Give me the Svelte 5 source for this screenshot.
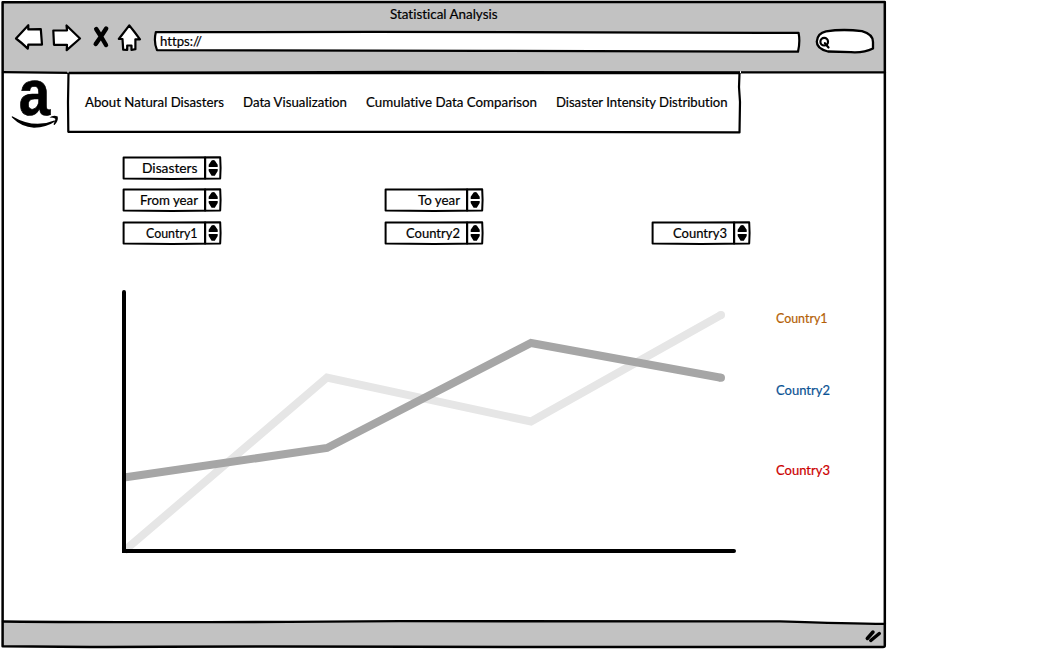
<script>
  const nav = [
    { text: 'About Natural Disasters', width: 139 },
    { text: 'Data Visualization', width: 104 },
    { text: 'Cumulative Data Comparison', width: 171 },
    { text: 'Disaster Intensity Distribution', width: 171.5 }
  ];
  const filters = [
    [{ text: 'Disasters', width: 55.5 }, null, null],
    [{ text: 'From year', width: 58 }, { text: 'To year', width: 42 }, null],
    [{ text: 'Country1', width: 51.5 }, { text: 'Country2', width: 54 }, { text: 'Country3', width: 54 }]
  ];
  const legend = [
    { text: 'Country1', width: 51.5, color: '#b45f06' },
    { text: 'Country2', width: 54, color: '#0b5394' },
    { text: 'Country3', width: 54, color: '#cc0000' }
  ];
</script>

{#snippet label(text, width, color)}
  <svg class="label" {width} height="18">
    <text x="0" y="13" textLength={width} lengthAdjust="spacingAndGlyphs" fill={color ?? '#000'} stroke={color ?? '#000'}>{text}</text>
  </svg>
{/snippet}

{#snippet stepper(item)}
  <div class="stack stepper">
    <svg width="100" height="24" class="ink">
      <path d="M1.6 1.6L50 1.4L98.2 1.3Q99 12 98.2 22.4L50 22.9L1.6 22.4Z" fill="#fff" stroke-width="2" />
      <path d="M83.1 1.5V22.5" stroke-width="2.2" />
      <path d="M89.6 4.6L91.2 4L92.8 4.6L95.7 8.8V10.9H86.7V8.8ZM86.7 13H95.7V15L92.8 19.8H89.6L86.7 15Z" fill="#000" stroke="none" />
    </svg>
    <div class="value">{@render label(item.text, item.width)}</div>
  </div>
{/snippet}

<div class="window stack">
  <svg class="ink" width="888" height="649">
    <path d="M3 3H885V72.5H3ZM3 621.8Q150 623 330 621.3H790L885 624.2V646.5H330L3 646Z" fill="#c2c2c2" stroke="none" />
    <path d="M2.6 2.2L360 1.9L884.8 2L885 330L884.8 645.8Q884.8 647 883 647H540Q230 645.8 90 647L2.6 646.2L2.8 320Z" stroke-width="2.5" />
    <path d="M3 72.2L70 72.8L400 72L885 72.4M3 621.5Q160 623 400 621.2L780 621.4Q850 623.8 885 623.9" stroke-width="2.3" />
    <path d="M867.3 638.5L873 632M870.8 640.5L879.3 633.5" stroke-width="3.5" />
  </svg>

  <div class="page">
    <header>
      <div class="title">{@render label('Statistical Analysis', 107.5)}</div>
      <div class="toolbar">
        <svg class="ink icons" width="126" height="32">
          <g stroke-width="2.2" fill="#fff">
            <path d="M2 15.5L14.3 2.2V6.4L26.8 6.2L28 21.7L14.3 21.5L13.8 25.6Q8 20 2 15.5Z" />
            <path d="M66 15.5L52.5 2.5L53 7.3L39.3 7.5L40 21.8H53L52.7 27.2Z" />
            <path d="M115.3 2.3L104.8 16H108.5L109.2 26.6L113.2 27V22.5H117.5V27L121.4 26.2V16.3H126L120.5 9Z" />
          </g>
          <path d="M82.2 6L87 13.5L81.7 21M92.2 5.5L87 13.5L92 22" stroke-width="4.4" />
        </svg>
        <div class="stack address">
          <svg class="ink" width="648" height="24">
            <path d="M2.8 2.2L220 1.9L645.6 2.9Q647.3 12 645 21.7L330 20.9L4 20.1Q.5 12 2.8 2.2Z" fill="#fff" stroke-width="2.2" />
          </svg>
          <div class="url">{@render label('https://', 42)}</div>
        </div>
        <svg class="ink search" width="60" height="26">
          <path d="M11 2.3Q28-.2 47 2.1Q58.2 5.3 58 13V19.5Q49 24 36 23.2L13 22.5Q1.5 19.5 1.8 12.5Q2.5 4 11 2.3Z" fill="#fff" stroke-width="2.3" />
          <circle cx="9.2" cy="12.7" r="3.8" stroke-width="2.2" />
          <path d="M9.9 14.2L13.5 18.5" stroke-width="2.2" />
        </svg>
      </div>
    </header>

    <div class="masthead">
      <svg class="logo" width="64" height="60">
        <text x="0" y="0" transform="translate(18.8 43) scale(.87 1)">a</text>
        <path d="M12.2 44.2Q11.2 44.4 12 45.6Q21.5 55.3 34 55.7Q46.5 55.5 55 49.5Q56 48.4 54.2 48.4Q34 57 12.2 44.2Z" />
        <path d="M49.5 45.5Q53 42.8 57.7 44.4Q58.6 48.7 54.5 53Q53.3 53.2 53.8 51.5Q56 46.9 55 46.4Q53.7 45.6 49.5 45.5Z" />
      </svg>
      <div class="stack">
        <svg class="ink" width="675" height="62">
          <path d="M2.5 1.1H673.5L673 15L674 30L673.5 60.4L420 59.8L2.3 59.8L2 30Z" fill="#fff" stroke-width="2.2" />
          <path d="M2-.5V.5M674.5-.5V.7" stroke="#fff" stroke-width="1" />
        </svg>
        <nav>
          {#each nav as item}
            {@render label(item.text, item.width)}
          {/each}
        </nav>
      </div>
    </div>

    <div class="filters">
      {#each filters as row}
        {#each row as item}
          <div>
            {#if item}{@render stepper(item)}{/if}
          </div>
        {/each}
      {/each}
    </div>

    <div class="report">
      <svg width="620" height="268">
        <g fill="none" stroke-width="8" stroke-linejoin="miter">
          <path d="M4 262L207 88.5L411 132.5L601 26" stroke="#e6e6e6" />
          <path d="M4 188.5L207 159L411 54L601 88.7" stroke="#a6a6a6" />
        </g>
        <circle cx="601" cy="26" r="4" fill="#e6e6e6" />
        <circle cx="601" cy="88.7" r="4" fill="#a6a6a6" />
        <path class="ink axis" d="M4 3V262H614" stroke-width="4" />
      </svg>
      <div class="legend">
        {#each legend as item}
          {@render label(item.text, item.width, item.color)}
        {/each}
      </div>
    </div>
  </div>
</div>

<style>
  :global(body) { margin: 0; background: #fff; overflow: hidden; }
  svg { display: block; flex: none; overflow: visible; }
  .label { font: 13px Lato, sans-serif; font-variant-ligatures: none; stroke-width: .2; }
  .ink { fill: none; stroke: #000; stroke-linecap: round; stroke-linejoin: round; }
  .axis { stroke-linejoin: miter; }
  .stack { display: grid; align-items: start; justify-items: start; }
  .stack > * { grid-area: 1 / 1; }
  .window { width: 888px; height: 649px; }
  .page { width: 888px; }
  header { height: 72px; box-sizing: border-box; padding-top: 6px; }
  .title { display: flex; justify-content: center; padding-right: 1px; }
  .toolbar { display: flex; padding-left: 14px; }
  .icons { margin-top: -1px; }
  .address { margin: 6px 0 0 13px; }
  .url { padding: 3px 0 0 7px; }
  .search { margin: 5px 0 0 14px; }
  .masthead { display: flex; gap: 2px; height: 84px; }
  .logo { fill: #000; font: bold 65px "Liberation Sans", Arial, sans-serif; }
  .logo text { stroke: #000; stroke-width: .7; }
  nav { display: flex; gap: 19px; padding: 22px 0 0 19px; }
  .filters { display: grid; grid-template-columns: 262px 267px 100px; grid-template-rows: 32px 33px 32px; padding-left: 122px; }
  .value { display: flex; justify-content: flex-end; width: 75.7px; padding-top: 4px; }
  .report { display: flex; gap: 36px; padding: 36px 0 0 120px; }
  .legend { display: grid; grid-template-rows: 72px 80px 18px; padding-top: 21px; }
</style>
